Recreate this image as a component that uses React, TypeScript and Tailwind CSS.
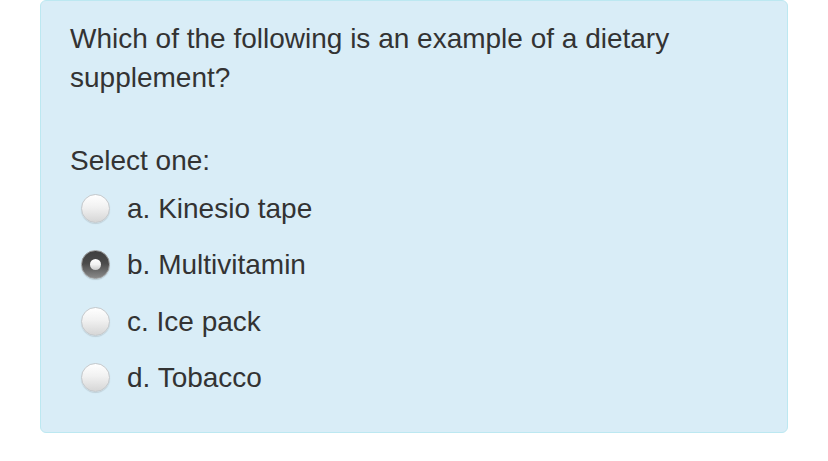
import React from "react";

const options = [
  { label: "a. Kinesio tape", checked: false },
  { label: "b. Multivitamin", checked: true },
  { label: "c. Ice pack", checked: false },
  { label: "d. Tobacco", checked: false },
];

function Radio({ checked }: { checked: boolean }) {
  if (checked) {
    return (
      <span className="flex h-[29px] w-[29px] shrink-0 items-center justify-center rounded-full border border-[#9a9a9a] bg-[linear-gradient(to_bottom,#3f3f3f_0%,#4a4a4a_45%,#8a8a8a_100%)] shadow-[0_1px_1px_rgba(0,0,0,0.15)]">
        <span className="h-[11px] w-[11px] rounded-full bg-[linear-gradient(to_bottom,#ffffff_0%,#f2f2f2_50%,#c9c9c9_100%)]" />
      </span>
    );
  }
  return (
    <span className="h-[29px] w-[29px] shrink-0 rounded-full border border-[#c4c8cb] bg-[linear-gradient(to_bottom,#ffffff_0%,#f1f1f1_45%,#d6d6d6_100%)] shadow-[0_1px_1px_rgba(0,0,0,0.12)]" />
  );
}

export default function App() {
  return (
    <div className="min-h-[461px] w-[828px] bg-white font-['Liberation_Sans',Arial,sans-serif] text-[#333333]">
      <div className="ml-[40px] h-[433px] w-[748px] rounded-[6px] border border-[#bce8f1] bg-[#d9edf7] pl-[29px] pr-[20px] pt-[18px]">
        <p className="text-[28px] leading-[39px]">
          Which of the following is an example of a dietary supplement?
        </p>
        <p className="mt-[44px] text-[28px] leading-[39px]">Select one:</p>
        <div className="flex flex-col">
          {options.map((o) => (
            <label
              key={o.label}
              className="flex h-[56.5px] items-center pl-[11px] text-[28px]"
            >
              <Radio checked={o.checked} />
              <span className="ml-[17px] leading-[39px]">{o.label}</span>
            </label>
          ))}
        </div>
      </div>
    </div>
  );
}
